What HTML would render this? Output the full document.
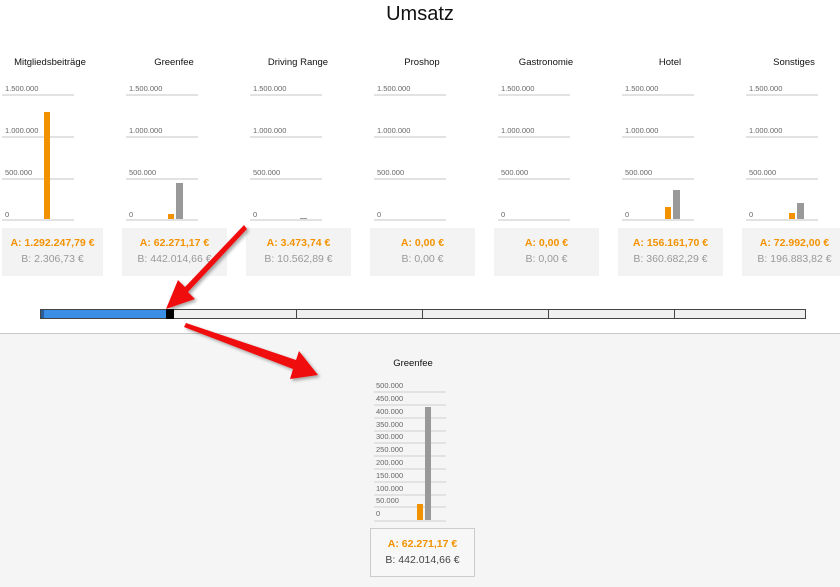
<!DOCTYPE html>
<html><head><meta charset="utf-8"><style>
*{margin:0;padding:0;box-sizing:border-box}
body{width:840px;height:587px;overflow:hidden;background:#fff;font-family:"Liberation Sans",Arial,sans-serif;position:relative}
.a{position:absolute}
.t{font-size:9.5px;color:#111;transform:translateX(-50%);white-space:nowrap}
.l{height:1.5px;background:#e2e2e2;width:72px}
.lb{font-size:7.5px;color:#666}
.bo{background:#f39200}.bg{background:#999}
.box{background:#f3f3f3;width:105px;height:48px;text-align:center}
.box .A{color:#f39200;font-weight:bold;font-size:10.5px;margin-top:9px}
.box .B{color:#999;font-size:10.5px;margin-top:4px}
</style></head><body>
<div class="a" style="left:0;top:3px;width:840px;text-align:center;font-size:20px;color:#111">Umsatz</div>

<div class="a t" style="left:50px;top:57px">Mitgliedsbeiträge</div>
<div class="a t" style="left:174px;top:57px">Greenfee</div>
<div class="a t" style="left:298px;top:57px">Driving Range</div>
<div class="a t" style="left:422px;top:57px">Proshop</div>
<div class="a t" style="left:546px;top:57px">Gastronomie</div>
<div class="a t" style="left:670px;top:57px">Hotel</div>
<div class="a t" style="left:794px;top:57px">Sonstiges</div>

<div class="a" style="left:2px;top:0">
 <div class="a lb" style="left:3px;top:84px">1.500.000</div><div class="a l" style="left:0;top:94px"></div>
 <div class="a lb" style="left:3px;top:126px">1.000.000</div><div class="a l" style="left:0;top:136px"></div>
 <div class="a lb" style="left:3px;top:168px">500.000</div><div class="a l" style="left:0;top:178px"></div>
 <div class="a lb" style="left:3px;top:210px">0</div><div class="a l" style="left:0;top:219px"></div>
</div>
<div class="a" style="left:126px;top:0">
 <div class="a lb" style="left:3px;top:84px">1.500.000</div><div class="a l" style="left:0;top:94px"></div>
 <div class="a lb" style="left:3px;top:126px">1.000.000</div><div class="a l" style="left:0;top:136px"></div>
 <div class="a lb" style="left:3px;top:168px">500.000</div><div class="a l" style="left:0;top:178px"></div>
 <div class="a lb" style="left:3px;top:210px">0</div><div class="a l" style="left:0;top:219px"></div>
</div>
<div class="a" style="left:250px;top:0">
 <div class="a lb" style="left:3px;top:84px">1.500.000</div><div class="a l" style="left:0;top:94px"></div>
 <div class="a lb" style="left:3px;top:126px">1.000.000</div><div class="a l" style="left:0;top:136px"></div>
 <div class="a lb" style="left:3px;top:168px">500.000</div><div class="a l" style="left:0;top:178px"></div>
 <div class="a lb" style="left:3px;top:210px">0</div><div class="a l" style="left:0;top:219px"></div>
</div>
<div class="a" style="left:374px;top:0">
 <div class="a lb" style="left:3px;top:84px">1.500.000</div><div class="a l" style="left:0;top:94px"></div>
 <div class="a lb" style="left:3px;top:126px">1.000.000</div><div class="a l" style="left:0;top:136px"></div>
 <div class="a lb" style="left:3px;top:168px">500.000</div><div class="a l" style="left:0;top:178px"></div>
 <div class="a lb" style="left:3px;top:210px">0</div><div class="a l" style="left:0;top:219px"></div>
</div>
<div class="a" style="left:498px;top:0">
 <div class="a lb" style="left:3px;top:84px">1.500.000</div><div class="a l" style="left:0;top:94px"></div>
 <div class="a lb" style="left:3px;top:126px">1.000.000</div><div class="a l" style="left:0;top:136px"></div>
 <div class="a lb" style="left:3px;top:168px">500.000</div><div class="a l" style="left:0;top:178px"></div>
 <div class="a lb" style="left:3px;top:210px">0</div><div class="a l" style="left:0;top:219px"></div>
</div>
<div class="a" style="left:622px;top:0">
 <div class="a lb" style="left:3px;top:84px">1.500.000</div><div class="a l" style="left:0;top:94px"></div>
 <div class="a lb" style="left:3px;top:126px">1.000.000</div><div class="a l" style="left:0;top:136px"></div>
 <div class="a lb" style="left:3px;top:168px">500.000</div><div class="a l" style="left:0;top:178px"></div>
 <div class="a lb" style="left:3px;top:210px">0</div><div class="a l" style="left:0;top:219px"></div>
</div>
<div class="a" style="left:746px;top:0">
 <div class="a lb" style="left:3px;top:84px">1.500.000</div><div class="a l" style="left:0;top:94px"></div>
 <div class="a lb" style="left:3px;top:126px">1.000.000</div><div class="a l" style="left:0;top:136px"></div>
 <div class="a lb" style="left:3px;top:168px">500.000</div><div class="a l" style="left:0;top:178px"></div>
 <div class="a lb" style="left:3px;top:210px">0</div><div class="a l" style="left:0;top:219px"></div>
</div>

<div class="a bo" style="left:44px;top:112px;width:6px;height:107px"></div>
<div class="a bo" style="left:168px;top:214px;width:6px;height:5px"></div>
<div class="a bg" style="left:176px;top:183px;width:7px;height:36px"></div>
<div class="a bg" style="left:300px;top:218px;width:7px;height:1px"></div>
<div class="a bo" style="left:665px;top:207px;width:6px;height:12px"></div>
<div class="a bg" style="left:673px;top:190px;width:7px;height:29px"></div>
<div class="a bo" style="left:789px;top:213px;width:6px;height:6px"></div>
<div class="a bg" style="left:797px;top:203px;width:7px;height:16px"></div>

<div class="a box" style="left:2px;top:228px;width:101px"><div class="A">A: 1.292.247,79 €</div><div class="B">B: 2.306,73 €</div></div>
<div class="a box" style="left:122px;top:228px"><div class="A">A: 62.271,17 €</div><div class="B">B: 442.014,66 €</div></div>
<div class="a box" style="left:246px;top:228px"><div class="A">A: 3.473,74 €</div><div class="B">B: 10.562,89 €</div></div>
<div class="a box" style="left:370px;top:228px"><div class="A">A: 0,00 €</div><div class="B">B: 0,00 €</div></div>
<div class="a box" style="left:494px;top:228px"><div class="A">A: 0,00 €</div><div class="B">B: 0,00 €</div></div>
<div class="a box" style="left:618px;top:228px"><div class="A">A: 156.161,70 €</div><div class="B">B: 360.682,29 €</div></div>
<div class="a box" style="left:742px;top:228px"><div class="A">A: 72.992,00 €</div><div class="B">B: 196.883,82 €</div></div>

<div class="a" style="left:40px;top:309px;width:766px;height:10px;border:1px solid #444;background:#efefef"></div>
<div class="a" style="left:41px;top:310px;width:125px;height:8px;background:#3a8ee6;border-left:3px solid #2a5f9a"></div>
<div class="a" style="left:166px;top:309px;width:8px;height:10px;background:#000"></div>
<div class="a" style="left:296px;top:310px;width:1px;height:8px;background:#444"></div>
<div class="a" style="left:422px;top:310px;width:1px;height:8px;background:#444"></div>
<div class="a" style="left:548px;top:310px;width:1px;height:8px;background:#444"></div>
<div class="a" style="left:674px;top:310px;width:1px;height:8px;background:#444"></div>

<div class="a" style="left:0;top:333px;width:840px;height:254px;background:#f5f5f5;border-top:1px solid #c8c8c8"></div>
<div class="a t" style="left:413px;top:358px">Greenfee</div>
<div class="a" style="left:374px;top:0">
 <div class="a lb" style="left:2px;top:381px">500.000</div><div class="a l" style="left:0;top:391px"></div>
 <div class="a lb" style="left:2px;top:394px">450.000</div><div class="a l" style="left:0;top:404px"></div>
 <div class="a lb" style="left:2px;top:407px">400.000</div><div class="a l" style="left:0;top:417px"></div>
 <div class="a lb" style="left:2px;top:420px">350.000</div><div class="a l" style="left:0;top:430px"></div>
 <div class="a lb" style="left:2px;top:432px">300.000</div><div class="a l" style="left:0;top:442px"></div>
 <div class="a lb" style="left:2px;top:445px">250.000</div><div class="a l" style="left:0;top:455px"></div>
 <div class="a lb" style="left:2px;top:458px">200.000</div><div class="a l" style="left:0;top:468px"></div>
 <div class="a lb" style="left:2px;top:471px">150.000</div><div class="a l" style="left:0;top:481px"></div>
 <div class="a lb" style="left:2px;top:484px">100.000</div><div class="a l" style="left:0;top:494px"></div>
 <div class="a lb" style="left:2px;top:496px">50.000</div><div class="a l" style="left:0;top:506px"></div>
 <div class="a lb" style="left:2px;top:509px">0</div><div class="a l" style="left:0;top:520px"></div>
</div>
<div class="a bo" style="left:417px;top:504px;width:6px;height:16px"></div>
<div class="a bg" style="left:425px;top:407px;width:6px;height:113px"></div>
<div class="a box" style="left:370px;top:528px;height:49px;background:#f7f7f7;border:1px solid #ccc"><div class="A">A: 62.271,17 €</div><div class="B" style="color:#444">B: 442.014,66 €</div></div>

<svg class="a" style="left:0;top:0" width="840" height="587">
<defs><filter id="s"><feDropShadow dx="2" dy="2" stdDeviation="1.5" flood-color="#000" flood-opacity="0.35"/></filter></defs>
<g fill="#f01010" filter="url(#s)">
<polygon points="244,225 247,229 188,292 195,299 166,309 178,280 185,287"/>
<polygon points="184,327 186,323 296,360 299,351 318,375 290,379 293,369"/>
</g>
</svg>
</body></html>
